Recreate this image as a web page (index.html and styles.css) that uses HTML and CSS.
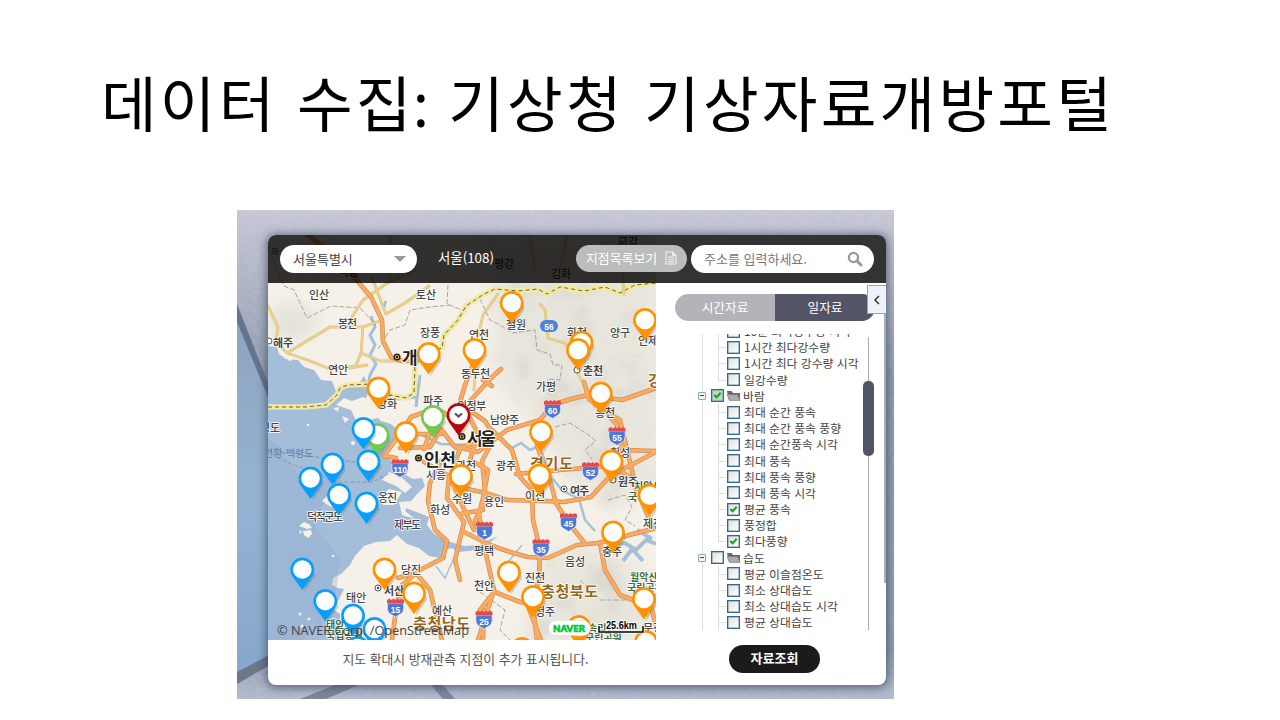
FILE: index.html
```html
<!DOCTYPE html>
<html lang="ko">
<head>
<meta charset="utf-8">
<title>데이터 수집</title>
<link rel="stylesheet" href="styles.css">
</head>
<body>
<main class="slide">
<h1 class="title">데이터 수집<span class="colon">:</span> 기상청 기상자료개방포털</h1>
<section class="photo">
<svg class="backdrop" viewBox="237 210 657 489" aria-hidden="true">
  <defs>
    <linearGradient id="wall" x1="0" y1="0" x2="0" y2="1"><stop offset="0" stop-color="#c4c6d3"/><stop offset=".06" stop-color="#b9bdcb"/><stop offset=".35" stop-color="#8d98ae"/><stop offset=".9" stop-color="#8c98b0"/><stop offset="1" stop-color="#b0b8ca"/></linearGradient>
    <linearGradient id="glass" x1="0" y1="0" x2="0" y2="1"><stop offset="0" stop-color="#8fa4bf"/><stop offset=".5" stop-color="#94b3d3"/><stop offset="1" stop-color="#86a8cc"/></linearGradient>
    <filter id="grain"><feTurbulence type="fractalNoise" baseFrequency=".25" numOctaves="2"/><feColorMatrix values="0 0 0 0 1  0 0 0 0 1  0 0 0 0 1  .5 0 0 0 -.1"/></filter>
  </defs>
  <rect x="237" y="210" width="657" height="489" fill="url(#wall)"/>
  <rect x="237" y="210" width="657" height="489" filter="url(#grain)" opacity=".35"/>
  <path d="M237 318L270 400V658L237 676Z" fill="url(#glass)"/>
  <path d="M237 304L270 388V402L237 322Z" fill="#64758d"/>
  <path d="M237 672L275 652V662L237 684Z" fill="#6c7788"/>
  <path d="M300 699L345 681H368L326 699ZM430 684L443 699H455L442 684Z" fill="#7d889b"/>
</svg>
<div class="panel">
<svg class="map" viewBox="268 235 388 405" role="img">
  <defs>
    <symbol id="pin" viewBox="-14 -14 28 38" overflow="visible">
      <path d="M2 22L13 6L10 -5L3 10Z" fill="#554" opacity=".25"/>
      <path d="M0 20.500L-9.800 7A12 12 0 1 1 9.800 7Z" fill="currentColor"/>
      <circle r="9.300" fill="#fff"/>
    </symbol>
    <symbol id="shield" viewBox="-10 -10 20 20" overflow="visible">
      <path d="M-8 -4H8Q9 4 6 6.500Q3 8 0 10Q-3 8 -6 6.500Q-9 4 -8 -4Z" fill="#4f78d2" stroke="#eef" stroke-width=".8"/>
      <path d="M-8.500 -3.800V-7L-6 -8.500L-4 -7L-2 -8.500L0 -7L2 -8.500L4 -7L6 -8.500L8.500 -7V-3.800Z" fill="#e34a50"/>
    </symbol>
    <filter id="soft" x="-30%" y="-30%" width="160%" height="160%"><feGaussianBlur stdDeviation="9"/></filter>
    <filter id="relief" x="0" y="0" width="100%" height="100%"><feTurbulence type="fractalNoise" baseFrequency=".032" numOctaves="3" seed="4"/><feColorMatrix values="0 0 0 0 .68  0 0 0 0 .68  0 0 0 0 .6  3 0 0 0 -1.45"/></filter>
    <mask id="hills"><rect x="268" y="235" width="388" height="405" fill="#000"/><path d="M485 235H660V485L610 510L560 470L545 420L500 390Z M545 560L580 540L660 580V640H520Z" fill="#fff" filter="url(#soft)"/></mask>
    <g id="highways">
      <path d="M308 235L345 265L360 284L371 297L382 320L383 341L391 357L402 361L417 361"/>
      <path d="M384 456L400 434L411 417L436 408L452 418L466 408L485 421L495 437L482 461L486 500L475 520L484 545L494 590L478 640"/>
      <path d="M400 448L430 447L441 429L454 446L478 452L507 430L540 420L552 405L571 399L588 395L597 407L620 420L633 475"/>
      <path d="M384 456L396 458M410 434L441 434M424 449L436 416M456 448L492 440M441 461L430 483L428 501L435 530L447 541L443 558L420 570L402 585L397 603L392 640"/>
      <path d="M424 462L449 476L447 498L464 522L455 560L460 580M460 449L450 477L463 507L474 530"/>
      <path d="M466 410L478 434L470 460L488 470L484 494L479 514L483 540M460 514L483 510M464 532L490 545L510 552L528 557L548 558L577 545L598 543L614 539L656 528"/>
      <path d="M458 487L486 493L507 500L544 501L564 502L591 497L610 476L656 452"/>
      <path d="M492 430L512 450L520 477L532 490L533 520L540 549L539 580L529 609L541 640"/>
      <path d="M516 474L560 470L610 466L632 478L654 506M537 446L550 480L556 503L570 525L584 542"/>
      <path d="M479 349L465 385L460 402M471 400L490 379L501 369M483 380L492 386M584 382L589 399L602 408L617 425L622 450L656 451M588 395L622 400L656 388"/>
      <path d="M600 543L605 570L620 595L633 600L656 596M398 578L416 573L430 590L442 640M495 592L520 602L533 604L537 640M484 610L483 640M491 596L480 610M649 600L656 625M631 478L641 500L652 525"/>
    </g>
    <g id="locals">
      <path d="M268 306L278 327L276 342L287 353L330 327L363 327L382 320M287 353L310 361L330 369L356 366L361 353L363 327M350 368L367 365M361 353L380 361L401 361M352 317L363 300L386 284L415 270M372 278L386 314L405 303L429 286M390 235V280M540 304L545 310L548 338L564 343L578 355L578 374L586 388M498 294L483 315L477 340L474 390M530 235L535 270M620 235L624 294M567 235L560 268"/>
    </g>
  </defs>
  <rect x="268" y="235" width="388" height="405" fill="#f5f1e9"/>
  <ellipse cx="292" cy="322" rx="25" ry="18" fill="#e3e1da" filter="url(#soft)"/>
  <rect x="268" y="235" width="388" height="405" fill="#dfddd3" mask="url(#hills)" opacity=".55"/>
  <rect x="268" y="235" width="388" height="405" filter="url(#relief)" mask="url(#hills)" opacity=".75"/>
  <path fill="#a4bdd9" d="M268 346L277 347L279 354L286 359L298 360L304 367L314 370L321 380L332 381L336 391L345 387L358 385L364 376L370 389L366 398L371 410L381 421L391 424L398 430L391 445L386 452L394 467L404 474L413 479L422 478L425 486L418 493L411 501L406 508L419 513L429 517L427 525L434 534L447 541L464 546L479 545L489 540L498 536L486 546L470 551L457 552L452 548L442 551L446 559L429 556L419 548L407 544L397 535L390 541L376 542L364 546L355 556L350 565L341 574L333 578L332 585L338 588L344 589L337 603L333 609L340 614L341 628L347 640H268Z"/>
  <path fill="#8faccf" opacity=".35" d="M268 438L280 448L300 477L335 479L314 524L340 560L304 640H268ZM310 590L340 560L334 610L315 630Z"/>
  <g fill="#f5f1e9">
    <path d="M336 405L344 398L352 401L363 397L371 401L381 417L370 420L364 427L357 423L351 410ZM357 424L366 427L372 438L367 444L358 438ZM382 480L389 472L400 476L412 487L405 493L396 486ZM322 501L331 492L339 502L331 507ZM399 502L411 501L405 511L415 519L402 515ZM380 497L389 489L402 492L394 505L383 505Z"/>
    <path d="M299 526L304 522L309 524L312 528L307 529ZM303 531L311 530L312 534L308 538L304 535ZM299 530L302 532L300 534Z"/>
    <circle cx="308" cy="425" r="1.200"/><circle cx="290" cy="359" r="2"/><circle cx="300" cy="614" r="1.500"/><circle cx="309" cy="619" r="1.500"/><circle cx="302" cy="626" r="1.500"/><path d="M333 408L339 407L338 412ZM342 416L349 419L345 423Z"/><circle cx="353" cy="443" r="2"/><circle cx="333" cy="556" r="1.300"/>
  </g>
  <g fill="none" stroke="#a7c0da" stroke-width="3">
    <path d="M371 316L375 327L370 335L375 345L370 355L376 364L370 375L367 389M386 301L383 309M367 389L383 391L398 399L417 397L416 407L420 375"/>
    <path d="M403 427L424 436L441 444L468 445L482 443L497 435L505 443L512 448L521 443L530 450L539 446L552 478L562 490L579 499L585 520L595 531" stroke-width="2.500"/>
    <path d="M612 545L625 543L636 550L646 540L656 544M623 561L632 549L643 561M637 530L652 539" stroke-width="4"/>
    <path d="M455 556L445 578L436 566M508 562L522 545M446 558L435 549" stroke-width="1.500"/>
  </g>
  <path d="M268 247L284 286L294 290L307 318L331 306L360 308L376 325M448 285L447 304L467 312M480 299L490 320L500 325L512 333L535 330L537 350L550 354L553 365L562 365L560 380L548 379L547 388M555 427L570 423L590 436L596 441L585 450L592 459M608 500L625 495L632 507L625 520L635 526M480 592L505 610L500 630L510 640M580 580L600 600L645 600M378 349L390 330L405 325L410 310L430 307L450 305" fill="none" stroke="#a8a49c" stroke-width="1" stroke-dasharray="5 2"/>
  <path d="M268 407L305 407L326 405L337 395L340 388L348 385L372 384L389 395L406 398L414 393L415 366L422 354L442 348L444 335L458 320L466 306L484 294L495 289L518 291L538 289L547 294L560 287L584 291L605 287L620 293L635 285L656 283" fill="none" stroke="#f2e8a0" stroke-width="5.500"/>
  <path d="M268 407L305 407L326 405L337 395L340 388L348 385L372 384L389 395L406 398L414 393L415 366L422 354L442 348L444 335L458 320L466 306L484 294L495 289L518 291L538 289L547 294L560 287L584 291L605 287L620 293L635 285L656 283" fill="none" stroke="#6a6240" stroke-width="1" stroke-dasharray="4 3"/>
  <path d="M268 450Q280 462 310 470L335 482H372L390 473M268 450L310 456L360 463" fill="none" stroke="#8299bd" stroke-width="1" stroke-dasharray="4 2"/>
  <use href="#locals" class="local-edge"/><use href="#locals" class="local"/>
  <use href="#highways" class="highway-edge"/><use href="#highways" class="highway"/>
  <g class="place">
    <text x="309" y="299" textLength="20">인산</text><text x="416" y="299" textLength="20">토산</text><text x="338" y="328" textLength="19">봉천</text><text x="420" y="337" textLength="20">장풍</text><text x="328" y="374" textLength="20">연안</text><text x="469" y="339" textLength="20">연천</text><text x="506" y="329" textLength="20">철원</text><text x="567" y="337" textLength="20">화천</text><text x="610" y="337" textLength="20">양구</text><text x="638" y="345" textLength="20">인제</text><text x="461" y="378" textLength="29">동두천</text><text x="536" y="391" textLength="20">가평</text><text x="377" y="408" textLength="20">강화</text><text x="423" y="405" textLength="20">파주</text><text x="457" y="410" textLength="29">의정부</text><text x="490" y="424" textLength="29">남양주</text><text x="595" y="417" textLength="20">홍천</text><text x="610" y="457" textLength="20">횡성</text><text x="496" y="470" textLength="20">광주</text><text x="456" y="470" textLength="20">과천</text><text x="426" y="479" textLength="20">시흥</text><text x="378" y="502" textLength="19">옹진</text><text x="307" y="521" textLength="36">덕적군도</text><text x="394" y="529" textLength="27">제부도</text><text x="430" y="514" textLength="20">화성</text><text x="452" y="503" textLength="20">수원</text><text x="484" y="506" textLength="20">용인</text><text x="525" y="500" textLength="20">이천</text><text x="474" y="555" textLength="20">평택</text><text x="401" y="574" textLength="20">당진</text><text x="346" y="602" textLength="20">태안</text><text x="432" y="615" textLength="20">예산</text><text x="474" y="590" textLength="20">천안</text><text x="525" y="582" textLength="20">진천</text><text x="535" y="616" textLength="20">청주</text><text x="565" y="566" textLength="20">음성</text><text x="602" y="556" textLength="20">충주</text><text x="643" y="528" textLength="20">제천</text><text x="643" y="632">문경</text><text x="260" y="432">평도</text>
  </g>
  <g class="place dim"><text x="339" y="276">학봉</text><text x="494" y="268">평강</text><text x="551" y="278">김화</text><text x="618" y="246">금강</text></g>
  <g class="place strong"><text x="273" y="347" textLength="20">해주</text><text x="583" y="375" textLength="20">춘천</text><text x="570" y="495" textLength="19">여주</text><text x="618" y="486" textLength="20">원주</text><text x="384" y="595" textLength="20">서산</text></g>
  <g class="city"><text x="402" y="364">개</text><text x="467" y="445" textLength="29">서울</text><text x="424" y="466" textLength="32">인천</text></g>
  <g class="province"><text x="530" y="469" textLength="43">경기도</text><text x="541" y="597" textLength="57">충청북도</text><text x="413" y="629" textLength="57">충청남도</text><text x="648" y="386">강원도</text></g>
  <g class="park"><text x="630" y="581">월악산</text><text x="627" y="592">국립공원</text><text x="634" y="490">치악산</text><text x="628" y="501">국립공원</text><text x="326" y="628">태안해안</text><text x="326" y="639">국립공원</text><text x="588" y="632">속리산</text><text x="585" y="642">국립공원</text></g>
  <text class="ferry" x="264" y="457">천항-백령도</text>
  <g class="capital"><circle cx="397" cy="357" r="2.800"/><circle cx="462" cy="436.500" r="2.800"/><circle cx="418.500" cy="458" r="2.800"/></g>
  <g class="capital-dot"><circle cx="397" cy="357" r="1.300"/><circle cx="462" cy="436.500" r="1.300"/><circle cx="418.500" cy="458" r="1.300"/></g>
  <g class="town"><circle cx="269" cy="341" r="3"/><circle cx="275" cy="251" r="3"/><circle cx="577" cy="370" r="3"/><circle cx="564" cy="489" r="3"/><circle cx="378" cy="588" r="3"/><circle cx="613" cy="480" r="3"/></g>
  <g class="town-dot"><circle cx="564" cy="489" r="1.200"/><circle cx="378" cy="588" r="1.200"/><circle cx="275" cy="251" r="1.200"/></g>
  <g class="shields">
    <rect x="540" y="320" width="18" height="12" rx="6" fill="#4c83dc"/>
    <use href="#shield" x="542.500" y="398.500" width="20" height="20"/><use href="#shield" x="607" y="425.500" width="20" height="20"/><use href="#shield" x="580.500" y="460.500" width="20" height="20"/><use href="#shield" x="390" y="457.500" width="20" height="20"/><use href="#shield" x="474.500" y="520" width="20" height="20"/><use href="#shield" x="558.500" y="511.500" width="20" height="20"/><use href="#shield" x="531" y="537.500" width="20" height="20"/><use href="#shield" x="474" y="609" width="20" height="20"/><use href="#shield" x="385.500" y="597" width="20" height="20"/>
    <text x="549" y="329.500">56</text><text x="552.500" y="414">60</text><text x="617" y="440.500">55</text><text x="590.500" y="475.500">52</text><text x="400" y="472.500">110</text><text x="484.500" y="535.500">1</text><text x="568.500" y="527">45</text><text x="541" y="553">35</text><text x="484" y="624.500">25</text><text x="395.500" y="612.500">15</text>
  </g>
  <g class="pins-orange">
    <use href="#pin" x="497.700" y="289" width="28" height="38"/><use href="#pin" x="414.700" y="340" width="28" height="38"/><use href="#pin" x="364.500" y="374.500" width="28" height="38"/><use href="#pin" x="460.500" y="336" width="28" height="38"/><use href="#pin" x="567.500" y="328.500" width="28" height="38"/><use href="#pin" x="564" y="336" width="28" height="38"/><use href="#pin" x="631" y="306" width="28" height="38"/><use href="#pin" x="586.800" y="379.500" width="28" height="38"/><use href="#pin" x="392" y="419" width="28" height="38"/><use href="#pin" x="447" y="462" width="28" height="38"/><use href="#pin" x="527" y="418" width="28" height="38"/><use href="#pin" x="525.500" y="461.500" width="28" height="38"/><use href="#pin" x="597.500" y="447.500" width="28" height="38"/><use href="#pin" x="635.500" y="481.500" width="28" height="38"/><use href="#pin" x="599" y="518.500" width="28" height="38"/><use href="#pin" x="370.500" y="555.500" width="28" height="38"/><use href="#pin" x="400" y="579.500" width="28" height="38"/><use href="#pin" x="495" y="558.500" width="28" height="38"/><use href="#pin" x="519" y="583" width="28" height="38"/><use href="#pin" x="565" y="613" width="28" height="38"/><use href="#pin" x="630" y="585" width="28" height="38"/><use href="#pin" x="632" y="628" width="28" height="38"/><use href="#pin" x="508" y="635" width="28" height="38"/>
  </g>
  <g class="pins-green"><use href="#pin" x="418.800" y="403" width="28" height="38"/><use href="#pin" x="363.500" y="421" width="28" height="38"/></g>
  <g class="pins-blue">
    <use href="#pin" x="349.500" y="415" width="28" height="38"/><use href="#pin" x="354.500" y="447.500" width="28" height="38"/><use href="#pin" x="318.500" y="450.500" width="28" height="38"/><use href="#pin" x="296.500" y="464.500" width="28" height="38"/><use href="#pin" x="325" y="481" width="28" height="38"/><use href="#pin" x="352.500" y="489.500" width="28" height="38"/><use href="#pin" x="288.300" y="555.500" width="28" height="38"/><use href="#pin" x="311.300" y="587" width="28" height="38"/><use href="#pin" x="339" y="601.500" width="28" height="38"/><use href="#pin" x="360.500" y="615" width="28" height="38"/><use href="#pin" x="343.500" y="634" width="28" height="38"/>
  </g>
  <g class="pins-red"><use href="#pin" x="444.500" y="401" width="28" height="38"/></g>
  <path d="M455 413.500L458.500 416.500L462 413.500" fill="none" stroke="#555" stroke-width="2.300"/>
  <text class="credit" x="277" y="634.500" textLength="192" lengthAdjust="spacingAndGlyphs">© NAVER Corp. /OpenStreetMap</text>
  <rect x="548.500" y="620.500" width="42" height="15" rx="7.500" fill="#fff" stroke="#d8d8d0" stroke-width=".6"/>
  <text class="naver" x="553" y="632" textLength="32" lengthAdjust="spacingAndGlyphs">NAVER</text>
  <path d="M599 626V632H643V626" fill="none" stroke="#fff" stroke-width="3"/><path d="M599 626V632H643V626" fill="none" stroke="#000" stroke-width="1.500"/>
  <text class="scale" x="606" y="629" textLength="31" lengthAdjust="spacingAndGlyphs">25.6km</text>
</svg>
<header class="toolbar">
  <div class="region">서울특별시<span class="arrow"></span></div>
  <div class="station">서울(108)</div>
  <div class="list-button">지점목록보기<svg width="12" height="14" viewBox="0 0 12 14"><path d="M1 1H7.500L11 4.500V13H1ZM7.500 1V4.500H11M3 6H9M3 8.300H9M3 10.600H9" fill="none" stroke="#f2f2f2" stroke-width="1.100"/></svg></div>
  <div class="search">주소를 입력하세요.<svg width="16" height="16" viewBox="0 0 16 16"><circle cx="6.500" cy="6.500" r="4.600" fill="none" stroke="#999" stroke-width="2.300"/><path d="M10 10L14 14" stroke="#999" stroke-width="3" stroke-linecap="round"/></svg></div>
</header>
<aside class="sidebar">
  <div class="tabs"><div class="tab">시간자료</div><div class="tab active">일자료</div></div>
  <div class="list">
    <ul class="tree">
      <li class="item"><i class="box"></i>10분 최다강수량 시각</li>
      <li class="item"><i class="box"></i>1시간 최다강수량</li>
      <li class="item"><i class="box"></i>1시간 최다 강수량 시각</li>
      <li class="item last"><i class="box"></i>일강수량</li>
      <li class="group"><i class="minus"></i><i class="box full"><svg viewBox="0 0 12 12"><path d="M2.500 5.500L5 8L9.500 3"/></svg></i><svg class="folder" viewBox="0 0 14 12"><path d="M0 1H4.500L6 3H13V10H2Z" fill="#66666d"/><path d="M0 4.500H10.500L13 10.500H2.500Z" fill="#aaaab2" stroke="#77777f" stroke-width=".6"/></svg>바람</li>
      <li class="item"><i class="box"></i>최대 순간 풍속</li>
      <li class="item"><i class="box"></i>최대 순간 풍속 풍향</li>
      <li class="item"><i class="box"></i>최대 순간풍속 시각</li>
      <li class="item"><i class="box"></i>최대 풍속</li>
      <li class="item"><i class="box"></i>최대 풍속 풍향</li>
      <li class="item"><i class="box"></i>최대 풍속 시각</li>
      <li class="item"><i class="box"><svg viewBox="0 0 12 12"><path d="M2.500 5.500L5 8L9.500 3"/></svg></i>평균 풍속</li>
      <li class="item"><i class="box"></i>풍정합</li>
      <li class="item last"><i class="box"><svg viewBox="0 0 12 12"><path d="M2.500 5.500L5 8L9.500 3"/></svg></i>최다풍향</li>
      <li class="group"><i class="minus"></i><i class="box"></i><svg class="folder" viewBox="0 0 14 12"><path d="M0 1H4.500L6 3H13V10H2Z" fill="#66666d"/><path d="M0 4.500H10.500L13 10.500H2.500Z" fill="#aaaab2" stroke="#77777f" stroke-width=".6"/></svg>습도</li>
      <li class="item"><i class="box"></i>평균 이슬점온도</li>
      <li class="item"><i class="box"></i>최소 상대습도</li>
      <li class="item"><i class="box"></i>최소 상대습도 시각</li>
      <li class="item"><i class="box"></i>평균 상대습도</li>
    </ul>
    <div class="track"><div class="thumb"></div></div>
  </div>
  <div class="submit">자료조회</div>
</aside>
<p class="note">지도 확대시 방재관측 지점이 추가 표시됩니다.</p>
<div class="collapse"><svg width="8" height="10" viewBox="0 0 8 10"><path d="M6 1L2 5L6 9" fill="none" stroke="#333" stroke-width="1.500"/></svg></div>
<div class="edge"></div>
</div>
</section>
</main>
</body>
</html>
```

FILE: styles.css
```css
* { box-sizing: border-box; }
body { margin: 0; background: #fff; font-family: "Noto Sans CJK KR", sans-serif; }
.slide { width: 1280px; height: 720px; overflow: hidden; }
.title { margin: 0; height: 210px; padding: 53px 0 0 101px; font-size: 60.500px; line-height: 95px; font-weight: 400; color: #000; white-space: nowrap; letter-spacing: 3.200px; word-spacing: -.8px; }
.colon { font-family: "Noto Sans", sans-serif; line-height: 1; letter-spacing: 0; margin-left: -2px; }
.photo { display: grid; width: 657px; height: 489px; margin-left: 237px; overflow: hidden; }
.backdrop { grid-area: 1 / 1; width: 657px; height: 489px; }
.panel { grid-area: 1 / 1; position: relative; display: grid; grid-template-columns: 388px 230px; grid-template-rows: 48px 357px 45px; width: 618px; height: 450px; margin: 25px 0 0 31px; border-radius: 8px; background: #fff; box-shadow: 0 1px 8px 2px rgba(35, 45, 70, .55); }
.map { grid-area: 1 / 1 / 3 / 2; width: 388px; height: 405px; border-top-left-radius: 8px; overflow: hidden; }
.toolbar { grid-area: 1 / 1 / 2 / 3; z-index: 1; display: flex; align-items: center; padding: 0 12px 1px; border-radius: 8px 8px 0 0; background: rgba(0, 0, 0, .8); font-size: 13px; line-height: 26px; white-space: nowrap; }
.region { display: flex; align-items: center; justify-content: space-between; width: 137px; height: 28px; padding: 0 11px 0 13px; border-radius: 14px; background: #fff; color: #444; }
.arrow { border: 6px solid transparent; border-top: 6px solid #999; border-bottom: 0; margin-top: 1px; }
.station { width: 138px; margin-left: 21px; color: #fff; font-size: 13.4px; margin-top: -3px; }
.list-button { display: flex; align-items: center; gap: 8px; width: 111px; height: 27px; padding: 0 0 1px 10px; border-radius: 14px; background: #bcbcbc; color: #fff; font-size: 12.900px; }
.search { display: flex; align-items: center; justify-content: space-between; width: 183px; height: 28px; margin-left: 4px; padding: 0 11px 0 13px; border-radius: 14px; background: #fff; color: #777; }
.sidebar { grid-area: 2 / 2 / 4 / 3; display: flex; flex-direction: column; padding: 11px 0 0 19px; }
.tabs { display: flex; width: 200px; height: 27px; border-radius: 14px; overflow: hidden; background: #b3b3b9; color: #fff; font-size: 12.700px; line-height: 26px; text-align: center; }
.tab { width: 100px; }
.active { background: #535465; }
.list { display: flex; width: 200px; height: 296px; margin-top: 13px; overflow: hidden; }
.tree { width: 188px; height: 310px; margin: -11px 0 0; padding: 0 0 0 27px; list-style: none; font-size: 11.850px; line-height: 16.190px; color: #444; white-space: nowrap; background: linear-gradient(90deg, transparent 27px, #ddd 27px, #ddd 28px, transparent 28px); }
.item, .group { display: flex; align-items: center; height: 16.190px; }
.item { padding-left: 24px; background: linear-gradient(#ddd, #ddd) 16px 0 / 1px 100% no-repeat, linear-gradient(#ddd, #ddd) 16px 8px / 8px 1px no-repeat; }
.last { background-size: 1px 9px, 8px 1px; }
.group { margin-left: -4px; }
.box { flex: none; display: block; width: 13px; height: 13px; margin-right: 4px; border: 1px solid #39658f; box-shadow: inset 0 0 0 .5px #6d90b0; background: linear-gradient(135deg, #dfdfda, #fff); }
.item .box { margin-left: 1px; }
.box svg { display: block; width: 11px; height: 11px; fill: none; stroke: #1d9c28; stroke-width: 2.200; }
.box.full { background: #bcdcb9; }
.group .box { margin: 0 3px 0 5px; }
.minus { width: 8px; height: 8px; border: 1px solid #8aa6bd; border-radius: 1px; background: linear-gradient(#444, #444) center / 4px 1px no-repeat, #f3f3f0; }
.folder { width: 14px; height: 12px; margin-right: 2px; }
.track { width: 12px; height: 293px; margin-top: 3px; padding-top: 44px; background: linear-gradient(90deg, transparent 5px, #aaa 5px, #aaa 6px, transparent 6px); }
.thumb { width: 11px; height: 75px; border-radius: 5px; background: #535465; }
.submit { width: 91px; height: 28px; margin: 15px 0 0 54px; border-radius: 14px; background: #1b1b1b; color: #fff; font-size: 13px; font-weight: 700; line-height: 26px; text-align: center; }
.note { grid-area: 3 / 1; margin: 0; padding-left: 7px; color: #555; font-size: 12.850px; line-height: 38px; text-align: center; white-space: nowrap; }
.collapse { position: absolute; top: 50px; right: 0; display: grid; place-items: center; width: 19px; height: 29px; border: 1px solid #9ca3ad; border-right: 0; background: #eef3fa; }
.edge { position: absolute; top: 79px; right: 0; width: 2px; height: 269px; background: #a9adb4; }

.local, .local-edge, .highway, .highway-edge { fill: none; stroke-linejoin: round; stroke-linecap: round; }
.local-edge { stroke: #d9bd7a; stroke-width: 2.800; }
.local { stroke: #ecd28b; stroke-width: 1.800; }
.highway-edge { stroke: #d68b4c; stroke-width: 4.600; }
.highway { stroke: #f8ab62; stroke-width: 3.200; }
.map text { paint-order: stroke; stroke-linejoin: round; }
.place { font-size: 11px; font-weight: 500; fill: #444; stroke: #fff; stroke-width: 1.500px; }
.dim { fill: #222; stroke: none; font-weight: 400; }
.strong { font-weight: 700; }
.city { font-size: 17px; font-weight: 700; fill: #222; stroke: #fff; stroke-width: 2px; }
.province { font-size: 15px; font-weight: 700; fill: #94661d; stroke: #fff; stroke-width: 1.500px; }
.park { font-size: 10px; font-weight: 700; fill: #406a3c; stroke: #fff; stroke-width: 1.500px; }
.ferry { font-size: 10px; fill: #6580ab; }
.capital { fill: #f0e040; stroke: #222; stroke-width: 1.500px; }
.capital-dot { fill: #222; }
.town { fill: #fff; stroke: #555; }
.town-dot { fill: #444; }
.shields text { font: 700 8.500px "Liberation Sans", sans-serif; fill: #fff; text-anchor: middle; }
.pins-orange { color: #ff9200; }
.pins-green { color: #71ca50; }
.pins-blue { color: #089ffb; }
.pins-red { color: #b70610; }
.credit { font: 12.500px "Open Sans", sans-serif; fill: #444; }
.naver { font: 900 10px Lato, sans-serif; fill: #08c83c; stroke: #08c83c; stroke-width: .7px; }
.scale { font: 700 10px "Liberation Sans", sans-serif; fill: #000; stroke: #fff; stroke-width: 2px; }
```
